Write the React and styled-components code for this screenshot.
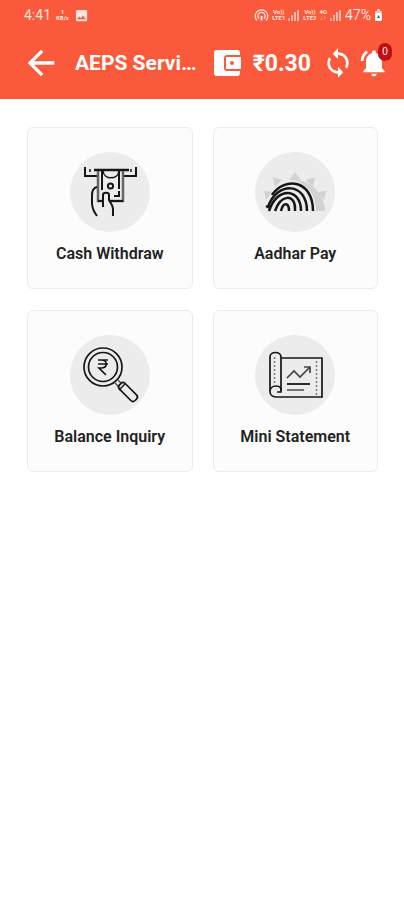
import React from 'react';
import styled, { createGlobalStyle } from 'styled-components';
import {
  MdArrowBack,
  MdSync,
  MdNotificationsActive,
  MdImage,
} from 'react-icons/md';

const services = [
  { title: 'Cash Withdraw', Icon: CashIcon },
  { title: 'Aadhar Pay', Icon: AadharIcon },
  { title: 'Balance Inquiry', Icon: BalanceIcon },
  { title: 'Mini Statement', Icon: StatementIcon },
];

function App() {
  return (
    <>
      <GlobalStyle />
      <Header>
        <StatusBar />
        <AppBar>
          <IconButton aria-label='Back'>
            <MdArrowBack size={40} />
          </IconButton>
          <Title>AEPS Services</Title>
          <WalletIcon />
          <Amount>₹0.30</Amount>
          <IconButton aria-label='Refresh'>
            <MdSync size={32} />
          </IconButton>
          <BellButton aria-label='Notifications'>
            <MdNotificationsActive size={32} />
            <Badge>0</Badge>
          </BellButton>
        </AppBar>
      </Header>
      <Grid>
        {services.map(({ title, Icon }) => (
          <Card key={title}>
            <Disc>
              <Icon />
            </Disc>
            {title}
          </Card>
        ))}
      </Grid>
    </>
  );
}

export default App;

function StatusBar() {
  return (
    <StatusRow>
      <StatusGroup $gap='5px'>
        <span>4:41</span>
        <Stacked>
          <b>1</b>
          <span>KB/s</span>
        </Stacked>
        <MdImage size={15} />
      </StatusGroup>
      <StatusGroup $gap='3px'>
        <HotspotIcon />
        <Stacked>
          <span>Vo))</span>
          <span>LTE1</span>
        </Stacked>
        <SignalIcon />
        <Stacked>
          <span>Vo))</span>
          <span>LTE2</span>
        </Stacked>
        <Stacked>
          <span>4G</span>
          <span>↓↑</span>
        </Stacked>
        <SignalIcon />
        <span>47%</span>
        <BatteryIcon />
      </StatusGroup>
    </StatusRow>
  );
}

function HotspotIcon() {
  return (
    <svg width='15' height='13' viewBox='0 0 15 13' fill='none' stroke='currentColor' strokeWidth='1.3'>
      <path d='M3 11.500a6.300 6.300 0 1 1 9 0' />
      <path d='M5 9.500a3.600 3.600 0 1 1 5 0' />
      <path d='M7.500 7v4.500' strokeWidth='2' />
    </svg>
  );
}

function SignalIcon() {
  return (
    <svg width='12' height='12' viewBox='0 0 12 12' fill='currentColor'>
      <rect x='0' y='9' width='2' height='3' opacity='.6' />
      <rect x='3' y='6' width='2' height='6' opacity='.6' />
      <rect x='6' y='3' width='2' height='9' opacity='.7' />
      <rect x='9' y='1' width='2' height='11' opacity='.7' />
    </svg>
  );
}

function BatteryIcon() {
  return (
    <svg width='9' height='12' viewBox='0 0 9 12'>
      <path d='M3 0h3v2h2v2H1V2h2z' fill='#fff' opacity='.6' />
      <rect x='1' y='4' width='7' height='8' rx='1' fill='#fff' />
      <path d='M4.500 6 6 9H3z' fill='#6b4a45' />
    </svg>
  );
}

function WalletIcon() {
  return (
    <svg width='27' height='26' viewBox='0 0 27 26'>
      <path d='M3 0h20c2 0 3 1 3 3v2H13c-2 0-3 1-3 3v10c0 2 1 3 3 3h13v2c0 2-1 3-3 3H3c-2 0-3-1-3-3V3c0-2 1-3 3-3z' fill='#fff' />
      <path d='M12 7h15v12H12z' fill='#fff' />
      <circle cx='18' cy='13' r='2' fill='#fb593b' />
    </svg>
  );
}

function CashIcon() {
  return (
    <Drawing viewBox='0 0 80 80'>
      <path d='M15 15v9h12M53 24h13v-9' strokeWidth='2' />
      <path d='M24 18h35' strokeWidth='2.500' />
      <path d='M20 17v3M61 17v3' strokeWidth='1.500' />
      <path d='M28 19v30h4M39 49h14V19' stroke='#666' strokeWidth='2.500' />
      <path d='M32 19v19M49 19v18M44 44h5v-5' strokeWidth='2' />
      <path d='M28 49h5M40 49h13' strokeWidth='2' />
      <path d='M33 19c1 9 15 9 16 0' strokeWidth='1.600' />
      <circle cx='40.500' cy='34' r='2.600' strokeWidth='2' />
      <path d='M27 35c-4 1-5 4-5 8v8c0 5 2 9 5 13' strokeWidth='2' />
      <path d='M33 55V43c0-3 6-3 6 0v5c2 4 4 5 4 9v7' strokeWidth='2' />
    </Drawing>
  );
}

function AadharIcon() {
  return (
    <Drawing viewBox='0 0 80 80'>
      <g fill='#d2d2d2' stroke='none'>
        <path d='M40 20l6 8H34zM18 25l9 3-7 7zM60 25l-9 3 7 7zM9 39l8 1-6 8zM71 39l-8 1 6 8z' />
        <path d='M38 28c18 0 31 13 32 31H61c0-16-8-27-23-31z' />
      </g>
      <g strokeWidth='2.500'>
        <path d='M17 43C30 24 58 28 58 59' />
        <path d='M11 54l2 1C22 29 52 30 52 59' />
        <path d='M14 59c8-25 32-23 32 0' />
        <path d='M20 59c6-17 20-17 20-3v3' />
        <path d='M26 59c2-9 8-9 8 0' />
      </g>
    </Drawing>
  );
}

function BalanceIcon() {
  return (
    <Drawing viewBox='0 0 80 80'>
      <circle cx='33' cy='32' r='19' strokeWidth='1.700' />
      <circle cx='33' cy='32' r='14.500' strokeWidth='1.700' />
      <path d='M28 25h10M28 29h10M28 25h3c7 0 7 8 0 8h-2l7 7' strokeWidth='1.700' />
      <path d='M45 48l4 4M48 45l4 4' stroke='#555' strokeWidth='1.500' />
      <rect x='47' y='53' width='22' height='8' rx='3' transform='rotate(45 58 57)' strokeWidth='1.700' />
      <path d='M49 55l6-6' strokeWidth='1.500' />
    </Drawing>
  );
}

function StatementIcon() {
  return (
    <Drawing viewBox='0 0 80 80'>
      <path d='M15 56V22c0-6 11-6 11 0v34' strokeWidth='1.700' />
      <path d='M26 23h41v39H21c-8 0-8-11 0-11 4 0 6 2 5 6h-4' strokeWidth='1.700' />
      <path d='M19.500 22v28M61.500 26v34' stroke='#777' strokeWidth='1.500' strokeDasharray='2 2' />
      <path d='M32 43l7-7 6 6 10-10M49 32h6v6' stroke='#444' strokeWidth='1.700' />
      <path d='M32 49h23' strokeWidth='1.800' />
      <path d='M32 55h17' stroke='#666' strokeWidth='1.800' />
    </Drawing>
  );
}

const GlobalStyle = createGlobalStyle`
  body {
    margin: 0;
    background: #fff;
    font-family: Roboto, 'Noto Sans', sans-serif;
  }
  * {
    box-sizing: border-box;
  }
  svg {
    flex-shrink: 0;
    display: block;
  }
`;

const Header = styled.header`
  background: #fb593b;
  color: #fff;
  padding-bottom: 6px;
`;

const StatusRow = styled.div`
  display: flex;
  justify-content: space-between;
  align-items: center;
  height: 30px;
  padding: 0 21px 0 24px;
  font-size: 14px;
  color: #ffe3dc;
`;

const StatusGroup = styled.div`
  display: flex;
  align-items: center;
  gap: ${({ $gap }) => $gap};
`;

const Stacked = styled.span`
  display: flex;
  flex-direction: column;
  align-items: center;
  font-size: 6px;
  line-height: 6px;
  font-weight: 700;
`;

const AppBar = styled.div`
  display: flex;
  align-items: center;
  height: 63px;
  padding: 3px 14px 0 21px;
`;

const IconButton = styled.button`
  display: flex;
  padding: 0;
  border: 0;
  background: none;
  color: inherit;
  cursor: pointer;
`;

const BellButton = styled(IconButton)`
  position: relative;
  margin-left: 4px;
`;

const Badge = styled.span`
  position: absolute;
  top: -4px;
  right: -2px;
  width: 14px;
  height: 18px;
  border-radius: 7px;
  background: #c40d10;
  font-size: 10px;
  line-height: 18px;
  text-align: center;
`;

const Title = styled.h1`
  flex: 1;
  min-width: 0;
  margin: 0 12px 0 14px;
  overflow: hidden;
  white-space: nowrap;
  text-overflow: ellipsis;
  font-size: 21px;
  font-weight: 700;
`;

const Amount = styled.span`
  margin: 0 11px 0 12px;
  font-size: 23px;
  font-weight: 700;
`;

const Grid = styled.main`
  display: grid;
  grid-template-columns: 1fr 1fr;
  gap: 21px 20px;
  padding: 28px 26px 28px 27px;
`;

const Card = styled.button`
  display: flex;
  flex-direction: column;
  align-items: center;
  gap: 12px;
  padding: 24px 0;
  border: 1px solid #ececec;
  border-radius: 6px;
  background: #fcfcfc;
  color: #222;
  font-family: inherit;
  font-size: 16px;
  line-height: 20px;
  font-weight: 600;
  cursor: pointer;
`;

const Disc = styled.span`
  width: 80px;
  height: 80px;
  border-radius: 50%;
  background: #ececec;
`;

const Drawing = styled.svg`
  width: 80px;
  height: 80px;
  fill: none;
  stroke: #161616;
`;
